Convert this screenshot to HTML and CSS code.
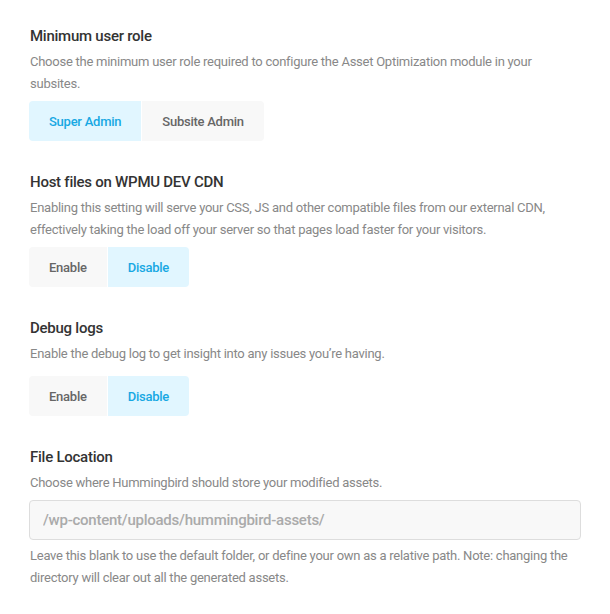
FILE: index.html
```html
<!DOCTYPE html>
<html lang="en">
<head>
<meta charset="utf-8">
<title>Asset Optimization Settings</title>
<link rel="stylesheet" href="styles.css">
</head>
<body>
<main class="settings">
  <section class="setting">
    <h3 class="setting__title">Minimum user role</h3>
    <p class="setting__desc">Choose the minimum user role required to configure the Asset Optimization module in your subsites.</p>
    <div class="tabs">
      <button class="tab tab--active" type="button">Super Admin</button>
      <button class="tab" type="button">Subsite Admin</button>
    </div>
  </section>

  <section class="setting">
    <h3 class="setting__title">Host files on WPMU DEV CDN</h3>
    <p class="setting__desc">Enabling this setting will serve your CSS, JS and other compatible files from our external CDN, effectively taking the load off your server so that pages load faster for your visitors.</p>
    <div class="tabs">
      <button class="tab" type="button">Enable</button>
      <button class="tab tab--active" type="button">Disable</button>
    </div>
  </section>

  <section class="setting">
    <h3 class="setting__title">Debug logs</h3>
    <p class="setting__desc setting__desc--loose">Enable the debug log to get insight into any issues you’re having.</p>
    <div class="tabs">
      <button class="tab" type="button">Enable</button>
      <button class="tab tab--active" type="button">Disable</button>
    </div>
  </section>

  <section class="setting">
    <h3 class="setting__title">File Location</h3>
    <p class="setting__desc">Choose where Hummingbird should store your modified assets.</p>
    <input class="field" type="text" placeholder="/wp-content/uploads/hummingbird-assets/">
    <p class="setting__help">Leave this blank to use the default folder, or define your own as a relative path. Note: changing the directory will clear out all the generated assets.</p>
  </section>
</main>
</body>
</html>
```

FILE: styles.css
```css
html, body {
  margin: 0;
  padding: 0;
  background: #ffffff;
}

body {
  font-family: Roboto, "Liberation Sans", Arial, sans-serif;
  letter-spacing: -0.25px;
  -webkit-font-smoothing: antialiased;
}

.settings {
  width: 552px;
  padding: 21px 0 0 29px;
  display: flex;
  flex-direction: column;
  gap: 26px;
}

.setting {
  display: flex;
  flex-direction: column;
  align-items: flex-start;
}

.setting__title {
  margin: 0;
  font-size: 15px;
  line-height: 30px;
  font-weight: 500;
  color: #333333;
  padding-left: 1px;
}

.setting__desc,
.setting__help {
  margin: 0 0 6px;
  font-size: 13px;
  line-height: 22px;
  font-weight: 400;
  color: #888888;
  padding-left: 1px;
}

.setting__desc--loose {
  margin-bottom: 11px;
}

.setting__help {
  margin: 5px 0 0;
}

.tabs {
  display: flex;
  gap: 1px;
  border-radius: 4px;
  overflow: hidden;
}

.tab {
  height: 40px;
  padding: 0 20px;
  border: 0;
  margin: 0;
  background: #f8f8f8;
  color: #666666;
  font-family: inherit;
  font-size: 13px;
  font-weight: 500;
  letter-spacing: -0.25px;
  cursor: pointer;
}

.tab--active {
  background: #e1f6ff;
  color: #17a8e3;
}

.field {
  box-sizing: border-box;
  width: 552px;
  height: 40px;
  margin: 0;
  padding: 0 13px;
  border: 1px solid #dddddd;
  border-radius: 4px;
  background: #f8f8f8;
  font-family: inherit;
  font-size: 15px;
  font-weight: 500;
  letter-spacing: -0.25px;
  color: #333333;
  outline: none;
}

.field::placeholder {
  color: #aaaaaa;
  opacity: 1;
}
```
